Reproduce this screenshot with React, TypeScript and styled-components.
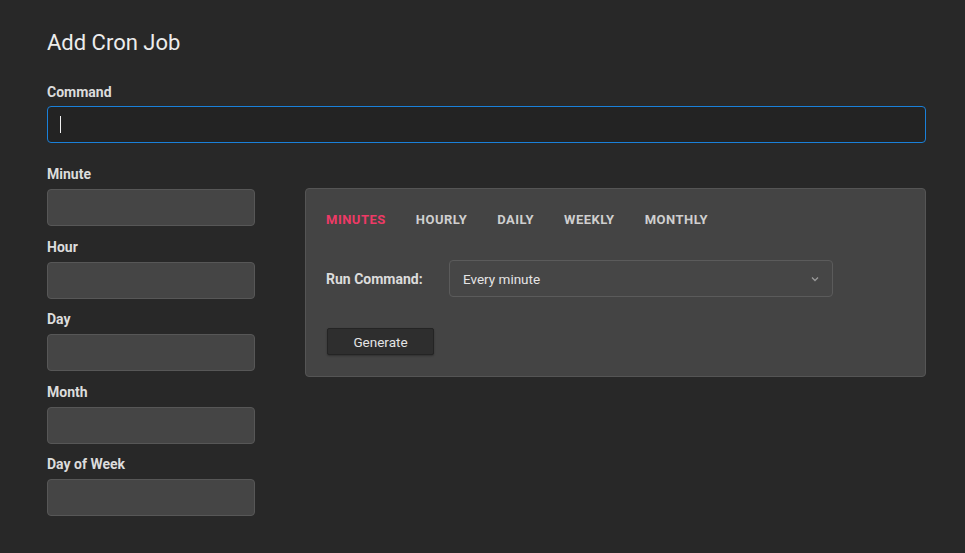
import React from 'react';
import styled, { createGlobalStyle } from 'styled-components';

const GlobalStyle = createGlobalStyle`
  html, body {
    margin: 0;
    padding: 0;
    background: #282828;
  }
  body {
    font-family: Roboto, "Noto Sans", sans-serif;
    color: #e4e4e4;
  }
`;

const Page = styled.div`
  width: 965px;
  height: 553px;
  box-sizing: border-box;
  padding: 29px 39px 0 47px;
  background: #282828;
`;

const Title = styled.h1`
  margin: 0 0 27px;
  font-size: 22px;
  font-weight: 400;
  line-height: 28px;
  color: #ececec;
`;

const Label = styled.label`
  display: block;
  font-size: 14px;
  font-weight: 700;
  line-height: 16px;
  color: #dcdcdc;
  margin-bottom: 7px;
`;

const CommandRow = styled.div`
  position: relative;
  margin-top: -1px;
`;

const CommandInput = styled.input`
  display: block;
  width: 100%;
  height: 37px;
  box-sizing: border-box;
  background: #232323;
  border: 1px solid #1a80d9;
  border-radius: 4px;
  color: #fff;
  font-size: 14px;
  padding: 0 12px;
  outline: none;
  caret-color: #fff;
`;

const Caret = styled.span`
  position: absolute;
  left: 13px;
  top: 10px;
  width: 1px;
  height: 17px;
  background: #f0f0f0;
`;

const Body = styled.div`
  display: flex;
  align-items: flex-start;
  gap: 50px;
  margin-top: 23px;
`;

const FieldColumn = styled.div`
  display: flex;
  flex-direction: column;
  width: 208px;
  flex-shrink: 0;
`;

const Field = styled.div`
  margin-bottom: 12.5px;
`;

const SmallInput = styled.input`
  display: block;
  width: 100%;
  height: 37px;
  box-sizing: border-box;
  background: #454545;
  border: 1px solid #575757;
  border-radius: 4px;
  outline: none;
  color: #eee;
`;

const Panel = styled.div`
  flex: 1;
  margin-top: 22px;
  height: 189px;
  box-sizing: border-box;
  background: #444444;
  border: 1px solid #555;
  border-radius: 4px;
  padding: 21px 20px 0 20px;
`;

const Tabs = styled.div`
  display: flex;
  gap: 30px;
  height: 18px;
  align-items: center;
`;

const Tab = styled.span<{ $active?: boolean }>`
  font-size: 13px;
  font-weight: 700;
  letter-spacing: 0.5px;
  color: ${(p) => (p.$active ? '#ee3a66' : '#cfcfcf')};
`;

const RunRow = styled.div`
  display: flex;
  align-items: center;
  margin-top: 32px;
`;

const RunLabel = styled.span`
  width: 123px;
  font-size: 14px;
  font-weight: 700;
  color: #dcdcdc;
`;

const Select = styled.div`
  width: 384px;
  height: 37px;
  box-sizing: border-box;
  display: flex;
  align-items: center;
  justify-content: space-between;
  padding: 0 12px 0 13px;
  background: #464646;
  border: 1px solid #5b5b5b;
  border-radius: 4px;
  font-size: 13.5px;
  color: #e4e4e4;
`;

const GenerateButton = styled.button`
  display: block;
  margin: 31px 0 0 1px;
  width: 107px;
  height: 27px;
  background: #2e2e2e;
  border: 1px solid #242424;
  border-radius: 2px;
  color: #e4e4e4;
  font-family: inherit;
  font-size: 13.5px;
  box-shadow: 0 1px 2px rgba(0, 0, 0, 0.3);
`;

const Chevron = () => (
  <svg width="10" height="10" viewBox="0 0 10 10">
    <path d="M2 3.5 L5 6.5 L8 3.5" fill="none" stroke="#9a9a9a" strokeWidth="1.3" />
  </svg>
);

const fields = ['Minute', 'Hour', 'Day', 'Month', 'Day of Week'];
const tabs = ['MINUTES', 'HOURLY', 'DAILY', 'WEEKLY', 'MONTHLY'];

export default function App() {
  return (
    <>
      <GlobalStyle />
      <Page>
        <Title>Add Cron Job</Title>
        <Label>Command</Label>
        <CommandRow>
          <CommandInput />
          <Caret />
        </CommandRow>
        <Body>
          <FieldColumn>
            {fields.map((f) => (
              <Field key={f}>
                <Label>{f}</Label>
                <SmallInput />
              </Field>
            ))}
          </FieldColumn>
          <Panel>
            <Tabs>
              {tabs.map((t, i) => (
                <Tab key={t} $active={i === 0}>
                  {t}
                </Tab>
              ))}
            </Tabs>
            <RunRow>
              <RunLabel>Run Command:</RunLabel>
              <Select>
                <span>Every minute</span>
                <Chevron />
              </Select>
            </RunRow>
            <GenerateButton>Generate</GenerateButton>
          </Panel>
        </Body>
      </Page>
    </>
  );
}
